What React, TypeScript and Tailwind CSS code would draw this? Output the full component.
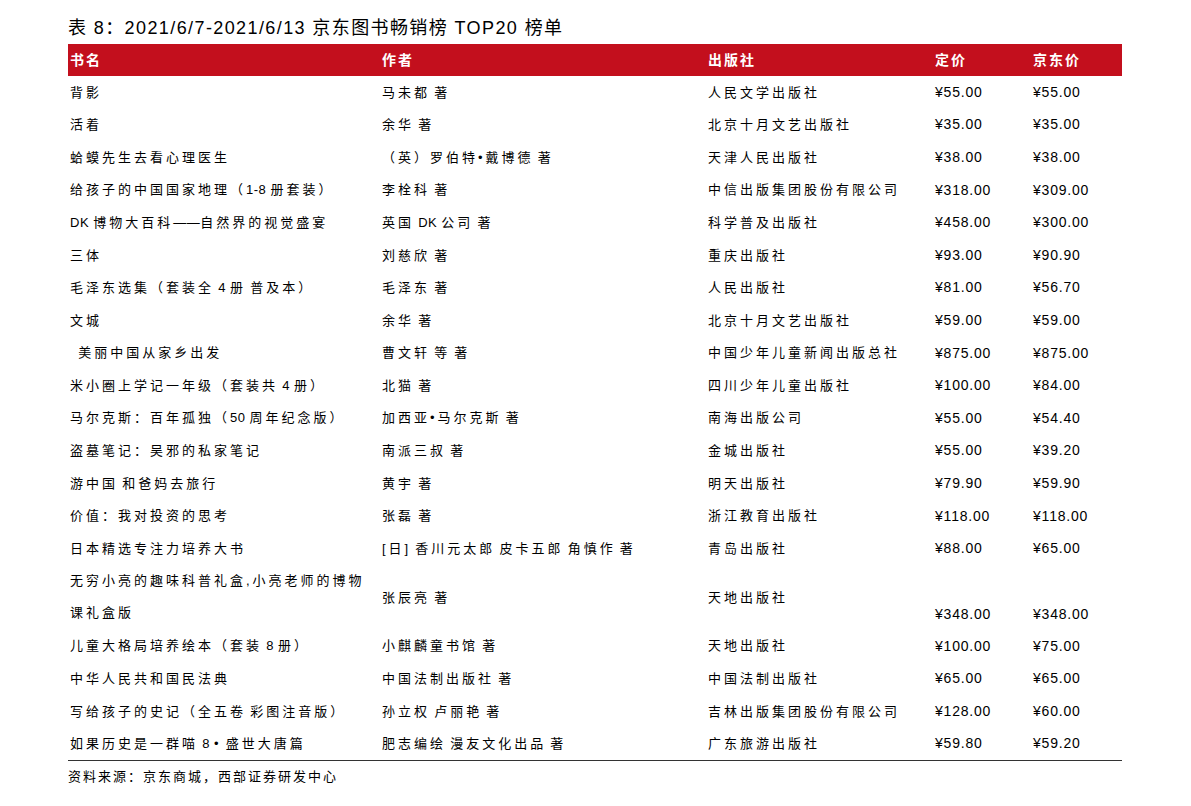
type Book = {
  name: string[];
  author: string;
  press: string;
  price: string;
  jd: string;
};

const books: Book[] = [
  { name: ["背影"], author: "马未都 著", press: "人民文学出版社", price: "¥55.00", jd: "¥55.00" },
  { name: ["活着"], author: "余华 著", press: "北京十月文艺出版社", price: "¥35.00", jd: "¥35.00" },
  { name: ["蛤蟆先生去看心理医生"], author: "（英）罗伯特•戴博德 著", press: "天津人民出版社", price: "¥38.00", jd: "¥38.00" },
  { name: ["给孩子的中国国家地理（1-8 册套装）"], author: "李栓科 著", press: "中信出版集团股份有限公司", price: "¥318.00", jd: "¥309.00" },
  { name: ["DK 博物大百科——自然界的视觉盛宴"], author: "英国 DK 公司 著", press: "科学普及出版社", price: "¥458.00", jd: "¥300.00" },
  { name: ["三体"], author: "刘慈欣 著", press: "重庆出版社", price: "¥93.00", jd: "¥90.90" },
  { name: ["毛泽东选集（套装全 4 册 普及本）"], author: "毛泽东 著", press: "人民出版社", price: "¥81.00", jd: "¥56.70" },
  { name: ["文城"], author: "余华 著", press: "北京十月文艺出版社", price: "¥59.00", jd: "¥59.00" },
  { name: ["\u00a0\u00a0美丽中国从家乡出发"], author: "曹文轩 等 著", press: "中国少年儿童新闻出版总社", price: "¥875.00", jd: "¥875.00" },
  { name: ["米小圈上学记一年级（套装共 4 册）"], author: "北猫 著", press: "四川少年儿童出版社", price: "¥100.00", jd: "¥84.00" },
  { name: ["马尔克斯：百年孤独（50 周年纪念版）"], author: "加西亚•马尔克斯 著", press: "南海出版公司", price: "¥55.00", jd: "¥54.40" },
  { name: ["盗墓笔记：吴邪的私家笔记"], author: "南派三叔 著", press: "金城出版社", price: "¥55.00", jd: "¥39.20" },
  { name: ["游中国 和爸妈去旅行"], author: "黄宇 著", press: "明天出版社", price: "¥79.90", jd: "¥59.90" },
  { name: ["价值：我对投资的思考"], author: "张磊 著", press: "浙江教育出版社", price: "¥118.00", jd: "¥118.00" },
  { name: ["日本精选专注力培养大书"], author: "[日] 香川元太郎 皮卡五郎 角慎作 著", press: "青岛出版社", price: "¥88.00", jd: "¥65.00" },
  { name: ["无穷小亮的趣味科普礼盒,小亮老师的博物", "课礼盒版"], author: "张辰亮 著", press: "天地出版社", price: "¥348.00", jd: "¥348.00" },
  { name: ["儿童大格局培养绘本（套装 8 册）"], author: "小麒麟童书馆 著", press: "天地出版社", price: "¥100.00", jd: "¥75.00" },
  { name: ["中华人民共和国民法典"], author: "中国法制出版社 著", press: "中国法制出版社", price: "¥65.00", jd: "¥65.00" },
  { name: ["写给孩子的史记（全五卷 彩图注音版）"], author: "孙立权 卢丽艳 著", press: "吉林出版集团股份有限公司", price: "¥128.00", jd: "¥60.00" },
  { name: ["如果历史是一群喵 8 • 盛世大唐篇"], author: "肥志编绘 漫友文化出品 著", press: "广东旅游出版社", price: "¥59.80", jd: "¥59.20" },
];

// latin runs and spaces keep normal tracking, CJK gets the wide spacing of the original
const latin = /^[A-Za-z0-9\-. —\u00a0]+$/;

function Mixed({ text }: { text: string }) {
  const parts = text.match(/[A-Za-z0-9\-. —\u00a0]+|[^A-Za-z0-9\-. —\u00a0]+/g) ?? [];
  return (
    <>
      {parts.map((p, i) =>
        latin.test(p) ? (
          <span key={i} className="tracking-[0.5px]">{p}</span>
        ) : (
          <span key={i}>{p}</span>
        )
      )}
    </>
  );
}

const cols = "grid grid-cols-[312px_326px_227px_98px_91px]";
const font = { fontFamily: '"Liberation Sans", "Noto Sans CJK SC", sans-serif' };

export default function App() {
  return (
    <div className="min-h-screen bg-white pl-[68px] pt-[16px] text-black" style={font}>
      <h1 className="text-[18px] leading-[24px] tracking-[1.4px]">
        表 8：2021/6/7-2021/6/13 京东图书畅销榜 TOP20 榜单
      </h1>

      <div className="mt-[4px] w-[1054px]">
        <div className={`${cols} h-[32px] items-center bg-[#c30f1d] text-[14px] font-bold tracking-[2px] text-white`}>
          <div className="pl-[2px]">书名</div>
          <div className="pl-[2px]">作者</div>
          <div className="pl-[2px]">出版社</div>
          <div className="pl-[2px]">定价</div>
          <div className="pl-[2px]">京东价</div>
        </div>

        <div className="border-b border-[#333]">
          {books.map((b, i) => {
            const tall = b.name.length > 1;
            return (
              <div
                key={i}
                className={`${cols} text-[13px] tracking-[3px] ${tall ? "h-[65px]" : "h-[32.6px] items-center"}`}
              >
                <div className={`pl-[2px] ${tall ? "flex flex-col justify-center" : ""}`}>
                  {b.name.map((n, j) => (
                    <div key={j} className={tall ? "leading-[32px] whitespace-nowrap" : "whitespace-nowrap"}>
                      <Mixed text={n} />
                    </div>
                  ))}
                </div>
                <div className={`pl-[2px] whitespace-nowrap ${tall ? "self-center" : ""}`}>
                  <Mixed text={b.author} />
                </div>
                <div className={`pl-[2px] whitespace-nowrap ${tall ? "self-center" : ""}`}>{b.press}</div>
                <div className={`pl-[2px] text-[14px] tracking-[0.8px] ${tall ? "self-end leading-[32px]" : ""}`}>
                  {b.price}
                </div>
                <div className={`pl-[2px] text-[14px] tracking-[0.8px] ${tall ? "self-end leading-[32px]" : ""}`}>
                  {b.jd}
                </div>
              </div>
            );
          })}
        </div>
      </div>

      <p className="mt-[6px] text-[13px] tracking-[2px]">资料来源：京东商城，西部证券研发中心</p>
    </div>
  );
}
